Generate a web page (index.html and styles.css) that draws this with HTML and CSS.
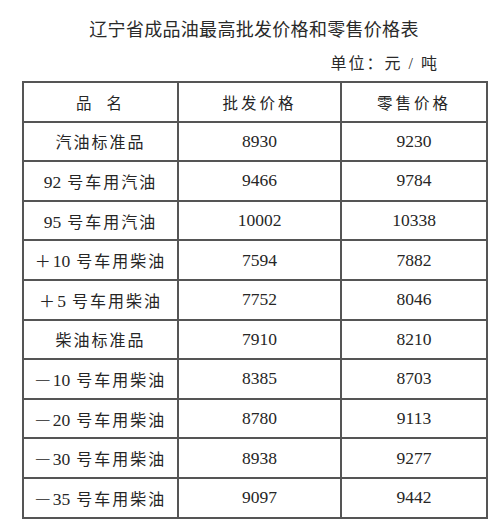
FILE: index.html
```html
<!DOCTYPE html>
<html lang="zh">
<head>
<meta charset="utf-8">
<link rel="stylesheet" href="styles.css">
</head>
<body>
<div class="page">
  <h1 class="title">辽宁省成品油最高批发价格和零售价格表</h1>
  <div class="unit">单位：元 / 吨</div>
  <table class="prices">
    <colgroup>
      <col class="c1"><col class="c2"><col class="c3">
    </colgroup>
    <thead>
      <tr><th><span class="wide">品</span>名</th><th>批发价格</th><th>零售价格</th></tr>
    </thead>
    <tbody>
      <tr><td>汽油标准品</td><td>8930</td><td>9230</td></tr>
      <tr><td><span class="n">92</span> 号车用汽油</td><td>9466</td><td>9784</td></tr>
      <tr><td><span class="n">95</span> 号车用汽油</td><td>10002</td><td>10338</td></tr>
      <tr><td>＋<span class="n">10</span> 号车用柴油</td><td>7594</td><td>7882</td></tr>
      <tr><td>＋<span class="n">5</span> 号车用柴油</td><td>7752</td><td>8046</td></tr>
      <tr><td>柴油标准品</td><td>7910</td><td>8210</td></tr>
      <tr><td><span class="dash">—</span><span class="n">10</span> 号车用柴油</td><td>8385</td><td>8703</td></tr>
      <tr><td><span class="dash">—</span><span class="n">20</span> 号车用柴油</td><td>8780</td><td>9113</td></tr>
      <tr><td><span class="dash">—</span><span class="n">30</span> 号车用柴油</td><td>8938</td><td>9277</td></tr>
      <tr><td><span class="dash">—</span><span class="n">35</span> 号车用柴油</td><td>9097</td><td>9442</td></tr>
    </tbody>
  </table>
</div>
</body>
</html>
```

FILE: styles.css
```css
html, body {
  margin: 0;
  padding: 0;
  background: #ffffff;
}
body {
  font-family: "Liberation Serif", "Noto Sans CJK SC", serif;
  color: #262626;
}
.page {
  width: 500px;
  height: 532px;
  overflow: hidden;
}
.title {
  margin: 0 0 0 22px;
  width: 464px;
  padding-top: 19px;
  font-size: 18px;
  line-height: 22px;
  font-weight: normal;
  letter-spacing: 0.3px;
  text-align: center;
  color: #2a2a2a;
}
.unit {
  margin-top: 13px;
  padding-right: 61px;
  font-size: 16px;
  line-height: 20px;
  letter-spacing: 2px;
  text-align: right;
  color: #2a2a2a;
}
.prices {
  margin: 7px 0 0 22px;
  width: 464px;
  border-collapse: collapse;
  table-layout: fixed;
  border: 2px solid #4a4a4a;
}
.c1 { width: 155px; }
.c2 { width: 163px; }
.c3 { width: 146px; }
.prices th,
.prices td {
  border: 2px solid #555555;
  height: 37.6px;
  padding: 0;
  text-align: center;
  vertical-align: middle;
  font-size: 16px;
  font-weight: normal;
  letter-spacing: 2px;
  white-space: nowrap;
}
.prices td:nth-child(2),
.prices td:nth-child(3) {
  font-size: 17.5px;
  letter-spacing: 0;
}
.prices th {
  letter-spacing: 3px;
  font-size: 15.5px;
}
.n {
  font-size: 17.5px;
  letter-spacing: 0;
}
.dash {
  font-family: "Noto Sans CJK SC", sans-serif;
  letter-spacing: 0;
  margin-right: 2px;
}
.wide {
  margin-right: 12px;
}
```
